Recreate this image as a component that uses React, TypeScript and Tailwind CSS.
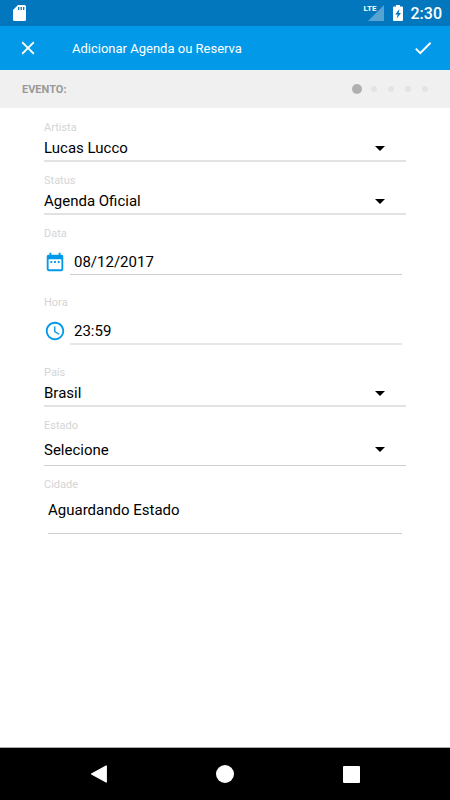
import type { ReactNode } from "react"
import { MdAccessTime, MdCheck, MdClose, MdDateRange } from "react-icons/md"

const STEPS = 5

function StatusBar() {
  return (
    <div className="flex h-[26px] items-center bg-[#0277bd] pl-[13px] pr-2 text-white">
      <svg className="h-4 w-[13px]" viewBox="0 0 13 16" aria-hidden="true">
        <path
          d="M5 0h6.5A1.5 1.5 0 0 1 13 1.5v13a1.5 1.5 0 0 1-1.5 1.5h-10A1.5 1.5 0 0 1 0 14.5V5z"
          fill="#fff"
        />
        <path d="M5.7 2v3M8.2 2v3M10.7 2v3" stroke="#0277bd" strokeWidth="1.3" />
      </svg>
      <div className="ml-auto flex items-center">
        <div className="relative h-4 w-[20px]">
          <svg className="absolute right-0 top-0 size-4" viewBox="0 0 16 16" aria-hidden="true">
            <path d="M16 0v16H0z" fill="#55a3d3" />
          </svg>
          <span className="absolute left-0 top-0 text-[8px] font-bold leading-[8px]">LTE</span>
        </div>
        <svg className="ml-[9px] h-4 w-[10px]" viewBox="0 0 10 16" aria-hidden="true">
          <path d="M3 0h4v1.500h2a1 1 0 0 1 1 1V15a1 1 0 0 1-1 1H1a1 1 0 0 1-1-1V2.500a1 1 0 0 1 1-1h2z" fill="#fff" />
          <path d="M6.500 4 2.200 9.400h2.400L3.900 13.500 8 8H5.700z" fill="#0277bd" />
        </svg>
        <span className="ml-2 pt-[2px] text-base font-medium leading-5">2:30</span>
      </div>
    </div>
  )
}

function AppBar() {
  return (
    <header className="flex h-11 items-center bg-[#0299e9] pl-[17px] pr-4 text-white">
      <button type="button" aria-label="Fechar">
        <MdClose size={22} />
      </button>
      <h1 className="ml-[33px] pt-px text-[13px] leading-5">Adicionar Agenda ou Reserva</h1>
      <button type="button" aria-label="Salvar" className="ml-auto">
        <MdCheck size={22} />
      </button>
    </header>
  )
}

function StepHeader({ current }: { current: number }) {
  return (
    <div className="flex h-[38px] items-center justify-between bg-[#f0f0f0] pl-[22px] pr-[17px]">
      <h2 className="pt-[2px] text-[11px] font-bold leading-4 text-[#999]">EVENTO:</h2>
      <div className="flex">
        {Array.from({ length: STEPS }, (_, i) => (
          <span key={i} className="flex w-[17px] items-center justify-center">
            <span
              className={i === current ? "size-[10px] rounded-full bg-[#b0b0b0]" : "size-[6px] rounded-full bg-[#e2e4e4]"}
            />
          </span>
        ))}
      </div>
    </div>
  )
}

function Label({ htmlFor, children }: { htmlFor: string; children: ReactNode }) {
  return (
    <label htmlFor={htmlFor} className="block text-[11px] leading-4 text-[#d3d5d5]">
      {children}
    </label>
  )
}

interface SelectFieldProps {
  id: string
  label: string
  value: string
  className?: string
}

function SelectField({ id, label, value, className = "h-[26px] border-b-2 border-[#e2e2e2]" }: SelectFieldProps) {
  return (
    <div>
      <Label htmlFor={id}>{label}</Label>
      <div className={`relative flex items-center ${className}`}>
        <select id={id} defaultValue={value} className="w-full appearance-none bg-transparent text-[15px] leading-5 outline-none">
          <option>{value}</option>
        </select>
        <svg className="pointer-events-none absolute right-[21px] h-[5px] w-[10px]" viewBox="0 0 10 5" aria-hidden="true">
          <path d="M0 0h10L5 5z" />
        </svg>
      </div>
    </div>
  )
}

interface IconFieldProps {
  id: string
  label: string
  value: string
  icon: ReactNode
  line: string
}

function IconField({ id, label, value, icon, line }: IconFieldProps) {
  return (
    <div>
      <Label htmlFor={id}>{label}</Label>
      <div className="mr-1 flex items-start gap-1 pt-2">
        <span className="pt-px text-[#0299e9]">{icon}</span>
        <input
          id={id}
          type="text"
          defaultValue={value}
          className={`min-w-0 flex-1 bg-transparent px-1 text-[15px] leading-6 outline-none ${line}`}
        />
      </div>
    </div>
  )
}

function NavBar() {
  return (
    <nav className="flex h-[53px] items-center justify-around border-t border-[#aaa] bg-black px-9 text-white">
      <button type="button" aria-label="Voltar">
        <svg className="size-[18px]" viewBox="0 0 18 18" fill="currentColor" aria-hidden="true">
          <path d="M1.600 9 16.200 1v16z" stroke="currentColor" strokeWidth="1.400" strokeLinejoin="round" />
        </svg>
      </button>
      <button type="button" aria-label="Início" className="size-[18px] rounded-full bg-white" />
      <button type="button" aria-label="Recentes" className="size-[17px] rounded-[1px] bg-white" />
    </nav>
  )
}

export default function App() {
  return (
    <div className="flex min-h-screen flex-col bg-white font-['Roboto',sans-serif] text-black">
      <StatusBar />
      <AppBar />
      <StepHeader current={0} />
      <form className="flex-1 px-11 pt-3">
        <div className="flex flex-col gap-[11px]">
          <SelectField id="artista" label="Artista" value="Lucas Lucco" />
          <SelectField id="status" label="Status" value="Agenda Oficial" />
          <div className="flex flex-col gap-5 pb-[9px]">
            <IconField
              id="data"
              label="Data"
              value="08/12/2017"
              icon={<MdDateRange size={22} />}
              line="border-b border-[#cfcfcf]"
            />
            <IconField
              id="hora"
              label="Hora"
              value="23:59"
              icon={<MdAccessTime size={22} />}
              line="border-b-2 border-[#e6e6e6]"
            />
          </div>
          <SelectField id="pais" label="País" value="Brasil" />
          <SelectField
            id="estado"
            label="Estado"
            value="Selecione"
            className="h-8 border-b border-[#cfcfcf]"
          />
          <div>
            <Label htmlFor="cidade">Cidade</Label>
            <div className="mx-1 border-b border-[#cfcfcf] pb-[6px]">
              <input
                id="cidade"
                type="text"
                defaultValue="Aguardando Estado"
                className="block h-[34px] w-full bg-transparent text-[15px] outline-none"
              />
            </div>
          </div>
        </div>
      </form>
      <NavBar />
    </div>
  )
}
